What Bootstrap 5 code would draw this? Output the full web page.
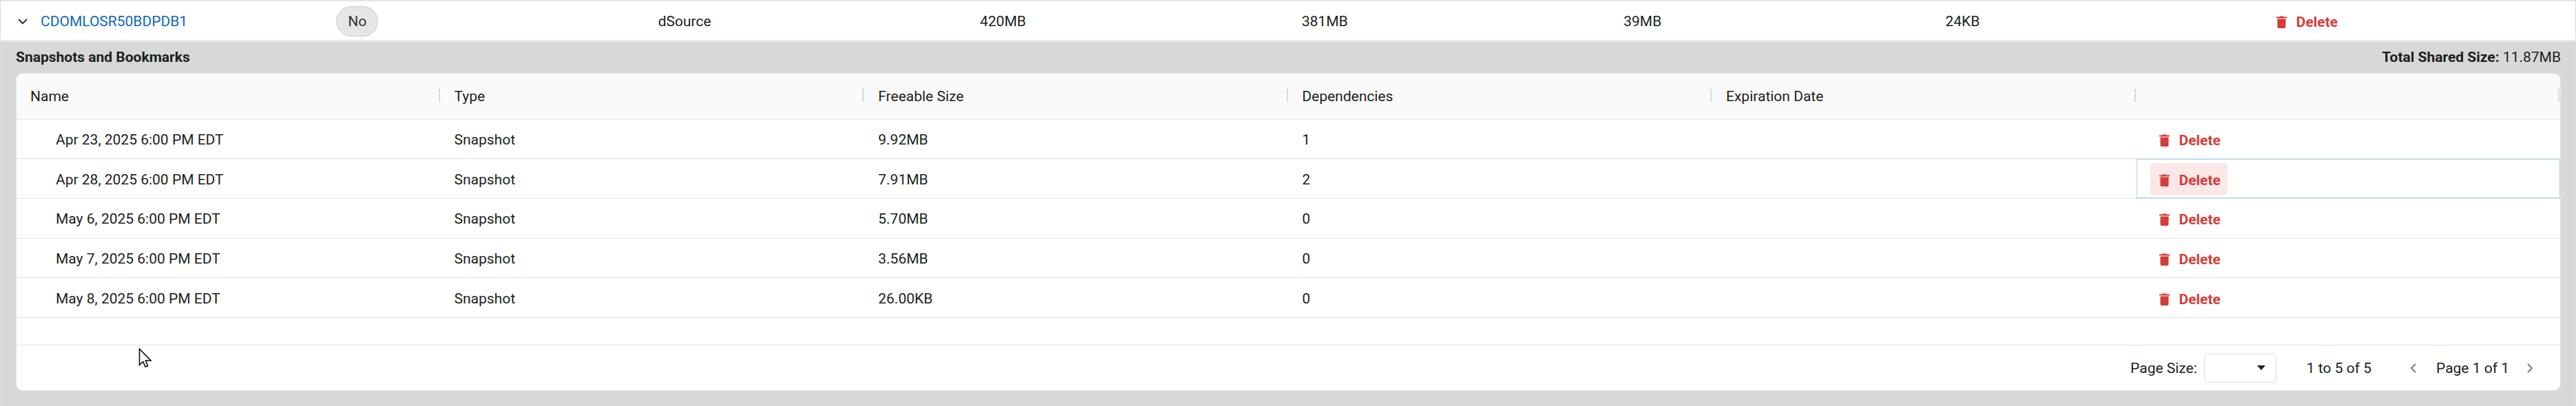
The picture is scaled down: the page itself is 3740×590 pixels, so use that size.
<!DOCTYPE html>
<html lang="en">
<head>
<meta charset="utf-8">
<meta name="viewport" content="width=device-width, initial-scale=1">
<title>Storage: Snapshots and Bookmarks</title>
<link href="https://cdn.jsdelivr.net/npm/bootstrap@5.3.0/dist/css/bootstrap.min.css" rel="stylesheet">
<style>
  body { font-family: Roboto, "Liberation Sans", sans-serif; font-size: 21px; line-height: 24px; color: #1b1f20; background: #fff; }
  .storage { border: 1px solid #dcdcdc; border-top: 2px solid #e4e4e4; }
  .storage table { table-layout: fixed; margin: 0; color: inherit; }
  .storage th, .storage td { font-weight: 400; vertical-align: middle; white-space: nowrap; }
  .sources { border-bottom: 1px solid #dcdcdc; }
  .sources td { height: 56px; padding: 1px 20px 0; border: 0; }
  .sources td:first-child { padding-left: 22px; }
  .sources a { color: #0f68bd; text-decoration: none; }
  .pill { display: inline-block; padding: 9px 16px; border: 1px solid #cbcbcb; border-radius: 22px; background: #e6e6e6; color: #333; }
  .detail { background: #d8d8d8; margin-top: 1px; padding: 11px 21px 22px 22px; }
  .detail-head { margin-bottom: 11px; }
  .panel { background: #fff; border: 1px solid #e2e2e2; border-radius: 10px; overflow: hidden; }
  .snaps { height: 355px; }
  .snaps th { position: relative; height: 66px; padding: 0 20px; background: #fafafa; border-bottom: 1px solid #e3e3e3; }
  .snaps th::after { content: ""; position: absolute; right: 1px; top: 22px; width: 2px; height: 19px; background: #d8d8d8; }
  .snaps td { padding: 2px 20px 0; border-bottom: 1px solid #e3e3e3; background: #fff; }
  .snaps td:first-child { padding-left: 57px; }
  .snaps td.focused { box-shadow: inset 0 0 0 1px #a9d2f0; background: #fff; }
  .del { height: 47px; padding: 2px 10px 0 13px; gap: 14px; border: 0; border-radius: 5px; background: transparent; color: #d63c38; font-weight: 700; }
  .del.active-tint { background: #fae7e7; }
  .table-gap { height: 40px; border-bottom: 1px solid #e3e3e3; }
  .pager { height: 65px; padding-right: 31px; }
  .pager select { width: 105px; height: 42px; margin: 0 44px 0 10px; border: 1px solid #d9d9d9; border-radius: 6px; font-size: 21px;
    background: #fff url("data:image/svg+xml,%3Csvg xmlns='http://www.w3.org/2000/svg' width='12' height='7' viewBox='0 0 12 7'%3E%3Cpath d='M0 0h12L6 7z' fill='%23222'/%3E%3C/svg%3E") no-repeat right 15px center / 12px 7px; }
  .step { border: 0; background: transparent; padding: 0 8px; color: #7c7c7c; }
  .page-of { margin: 0 17px 0 20px; }
  .pointer { position: absolute; left: 201px; top: 505px; pointer-events: none; }
</style>
</head>
<body>
<svg class="d-none" aria-hidden="true">
  <symbol id="bin" viewBox="0 0 15 18"><path fill="currentColor" d="M5 .5h5l.8.9H15v2H0v-2h4.200zM1.500 4.500h12V16a2 2 0 0 1-2 2h-8a2 2 0 0 1-2-2z"/></symbol>
</svg>
<main class="storage">
  <div class="sources">
    <table class="w-100">
      <tbody>
        <tr>
          <td><div class="d-flex align-items-center">
            <button class="btn p-0 border-0 d-flex align-items-center me-3" type="button" aria-expanded="true" aria-controls="detail" aria-label="Collapse row"><svg width="20" height="20" viewBox="0 0 20 20" fill="none" stroke="#333" stroke-width="2"><path d="M4 7l6 6 6-6"/></svg></button>
            <a href="#detail">CDOMLOSR50BDPDB1</a></div></td>
          <td><span class="pill">No</span></td>
          <td>dSource</td>
          <td>420MB</td>
          <td>381MB</td>
          <td>39MB</td>
          <td>24KB</td>
          <td><button type="button" class="del d-inline-flex align-items-center"><svg width="15" height="18"><use href="#bin"/></svg>Delete</button></td>
        </tr>
      </tbody>
    </table>
  </div>
  <section class="detail" id="detail">
    <div class="detail-head d-flex justify-content-between">
      <strong>Snapshots and Bookmarks</strong>
      <div><strong>Total Shared Size:</strong> 11.87MB</div>
    </div>
    <div class="panel">
      <table class="snaps w-100">
        <thead>
          <tr><th scope="col">Name</th><th scope="col">Type</th><th scope="col">Freeable Size</th><th scope="col">Dependencies</th><th scope="col">Expiration Date</th><th scope="col" aria-label="Actions"></th></tr>
        </thead>
        <tbody>
          <tr><td>Apr 23, 2025 6:00 PM EDT</td><td>Snapshot</td><td>9.92MB</td><td>1</td><td></td><td><button type="button" class="del d-inline-flex align-items-center"><svg width="15" height="18"><use href="#bin"/></svg>Delete</button></td></tr>
          <tr><td>Apr 28, 2025 6:00 PM EDT</td><td>Snapshot</td><td>7.91MB</td><td>2</td><td></td><td class="focused"><button type="button" class="del active-tint d-inline-flex align-items-center"><svg width="15" height="18"><use href="#bin"/></svg>Delete</button></td></tr>
          <tr><td>May 6, 2025 6:00 PM EDT</td><td>Snapshot</td><td>5.70MB</td><td>0</td><td></td><td><button type="button" class="del d-inline-flex align-items-center"><svg width="15" height="18"><use href="#bin"/></svg>Delete</button></td></tr>
          <tr><td>May 7, 2025 6:00 PM EDT</td><td>Snapshot</td><td>3.56MB</td><td>0</td><td></td><td><button type="button" class="del d-inline-flex align-items-center"><svg width="15" height="18"><use href="#bin"/></svg>Delete</button></td></tr>
          <tr><td>May 8, 2025 6:00 PM EDT</td><td>Snapshot</td><td>26.00KB</td><td>0</td><td></td><td><button type="button" class="del d-inline-flex align-items-center"><svg width="15" height="18"><use href="#bin"/></svg>Delete</button></td></tr>
        </tbody>
      </table>
      <div class="table-gap"></div>
      <div class="pager d-flex align-items-center justify-content-end">
        <label for="page-size">Page Size:</label>
        <select id="page-size" class="form-select"><option selected></option></select>
        <span class="me-5">1 to 5 of 5</span>
        <button type="button" class="step d-flex" aria-label="Previous page"><svg width="10" height="14" viewBox="0 0 10 14" fill="none" stroke="currentColor" stroke-width="2"><path d="M8 1L2 7l6 6"/></svg></button>
        <span class="page-of">Page 1 of 1</span>
        <button type="button" class="step d-flex" aria-label="Next page"><svg width="10" height="14" viewBox="0 0 10 14" fill="none" stroke="currentColor" stroke-width="2"><path d="M2 1l6 6-6 6"/></svg></button>
      </div>
    </div>
  </section>
</main>
<svg class="pointer" width="20" height="30" viewBox="0 0 20 30" aria-hidden="true"><path d="M1.500 2v23.500l5.200-5 3.300 7.500 3.500-1.500-3.200-7.500H18z" fill="#fff" stroke="#000" stroke-width="1.500"/></svg>
<script src="https://cdn.jsdelivr.net/npm/bootstrap@5.3.0/dist/js/bootstrap.bundle.min.js"></script>
</body>
</html>
